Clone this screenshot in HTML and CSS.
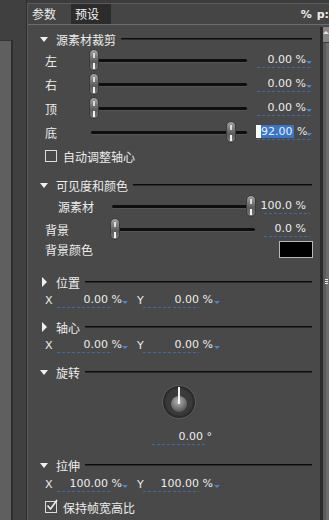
FILE: index.html
```html
<!DOCTYPE html>
<html lang="zh-CN">
<head>
    <meta charset="UTF-8">
    <title>参数</title>
    <link rel="stylesheet" href="styles.css">
</head>
<body>
<div class="app">
    <div class="side"><div class="side-box"></div></div>

    <div class="panel">
        <div class="tabs">
            <span class="tab">参数</span>
            <span class="tab tab-dark">预设</span>
            <span class="tab-extra">%<span class="tab-p">p:</span></span>
        </div>

        <div class="body">
            <div class="content">

                <!-- 源素材裁剪 -->
                <div class="sec sec-top">
                    <span class="tri"></span><span class="sec-title">源素材裁剪</span><span class="sec-line"></span>
                </div>
                <div class="row">
                    <span class="lbl">左</span>
                    <div class="slider"><span class="thumb" style="left: calc((100% - 10px) * 0)"></span></div>
                    <span class="val">0.00 %</span>
                </div>
                <div class="row">
                    <span class="lbl">右</span>
                    <div class="slider"><span class="thumb" style="left: calc((100% - 10px) * 0)"></span></div>
                    <span class="val">0.00 %</span>
                </div>
                <div class="row">
                    <span class="lbl">顶</span>
                    <div class="slider"><span class="thumb" style="left: calc((100% - 10px) * 0)"></span></div>
                    <span class="val">0.00 %</span>
                </div>
                <div class="row">
                    <span class="lbl">底</span>
                    <div class="slider"><span class="thumb" style="left: calc((100% - 10px) * 0.92)"></span></div>
                    <span class="val"><span class="sel">92.00</span> %</span>
                </div>
                <div class="row">
                    <span class="check"></span><span>自动调整轴心</span>
                </div>

                <!-- 可见度和颜色 -->
                <div class="sec sec-2">
                    <span class="tri"></span><span class="sec-title">可见度和颜色</span><span class="sec-line"></span>
                </div>
                <div class="row row-22 row-wide">
                    <span class="lbl lbl-in">源素材</span>
                    <div class="slider"><span class="thumb" style="left: calc((100% - 10px) * 1)"></span></div>
                    <span class="val val-plain">100.0 %</span>
                </div>
                <div class="row row-wide">
                    <span class="lbl">背景</span>
                    <div class="slider"><span class="thumb" style="left: calc((100% - 10px) * 0)"></span></div>
                    <span class="val val-plain">0.0 %</span>
                </div>
                <div class="row row-16">
                    <span class="lbl">背景颜色</span>
                    <span class="swatch"></span>
                </div>

                <!-- 位置 -->
                <div class="sec sec-3">
                    <span class="tri tri-closed"></span><span class="sec-title">位置</span><span class="sec-line"></span>
                </div>
                <div class="row row-16 xy">
                    <span class="xy-lbl">X</span><span class="xy-val xy-x">0.00 %</span>
                    <span class="xy-lbl xy-lbl-y">Y</span><span class="xy-val xy-y">0.00 %</span>
                </div>

                <!-- 轴心 -->
                <div class="sec sec-4">
                    <span class="tri tri-closed"></span><span class="sec-title">轴心</span><span class="sec-line"></span>
                </div>
                <div class="row row-16 xy">
                    <span class="xy-lbl">X</span><span class="xy-val xy-x">0.00 %</span>
                    <span class="xy-lbl xy-lbl-y">Y</span><span class="xy-val xy-y">0.00 %</span>
                </div>

                <!-- 旋转 -->
                <div class="sec sec-4">
                    <span class="tri"></span><span class="sec-title">旋转</span><span class="sec-line"></span>
                </div>
                <div class="knob-row">
                    <div class="knob"><div class="knob-ball"></div></div>
                </div>
                <div class="row row-16 rot-row">
                    <span class="rot-val">0.00 °</span>
                </div>

                <!-- 拉伸 -->
                <div class="sec sec-6">
                    <span class="tri"></span><span class="sec-title">拉伸</span><span class="sec-line"></span>
                </div>
                <div class="row row-16 xy xy-last">
                    <span class="xy-lbl">X</span><span class="xy-val xy-x">100.00 %</span>
                    <span class="xy-lbl xy-lbl-y">Y</span><span class="xy-val xy-y">100.00 %</span>
                </div>
                <div class="row row-20 row-last">
                    <span class="check check-on">
                        <svg width="14" height="14" viewBox="0 0 14 14"><path d="M2.5 6.5 L5.5 10 L12 1" fill="none" stroke="#eee" stroke-width="1.6"/></svg>
                    </span><span>保持帧宽高比</span>
                </div>
            </div>

            <div class="scroll">
                <div class="sb-up"><span class="sb-arrow"></span></div>
                <div class="sb-grip"></div>
            </div>
        </div>
    </div>
</div>
</body>
</html>
```

FILE: styles.css
```css
body {
    margin: 0;
    background-color: #3c3c3c;
    font-family: "Noto Sans CJK SC", "DejaVu Sans", sans-serif;
    font-size: 12px;
    color: #ececec;
}
.app {
    display: flex;
    width: 329px;
    height: 520px;
    overflow: hidden;
}

/* left strip */
.side {
    width: 26px;
    background-color: #404040;
    border-right: 1px solid #2c2c2c;
    display: flex;
    flex-direction: column;
}
.side-box {
    margin-top: 40px;
    width: 11px;
    flex: 1;
    background-color: #5f5f5f;
    border-top: 1px solid #343434;
    border-right: 2px solid #2e2e2e;
}

/* panel */
.panel {
    flex: 1;
    min-width: 0;
    margin-top: 3px;
    border-top: 1px solid #5a5a5a;
    border-left: 1px solid #5a5a5a;
    background-color: #494949;
    display: flex;
    flex-direction: column;
}
.tabs {
    height: 20px;
    display: flex;
    align-items: center;
    background-color: #454545;
}
.tab {
    padding: 0 4px;
    line-height: 20px;
}
.tab-dark {
    margin-left: 11px;
    padding-right: 12px;
    background-color: #2c2c2c;
    color: #f4f4f4;
}
.tab-extra {
    margin-left: auto;
    white-space: nowrap;
    font-family: "DejaVu Sans", sans-serif;
    font-weight: bold;
    font-size: 11px;
}
.tab-p {
    margin-left: 5px;
}
.body {
    flex: 1;
    display: flex;
    border-top: 1px solid #6c6c6c;
}
.content {
    flex: 1;
    padding-right: 8px;
}

/* section headers */
.sec {
    height: 20px;
    display: flex;
    align-items: center;
    padding-left: 12px;
}
.sec-top { margin-top: 5px; height: 18px; }
.sec-2 { margin-top: 7px; }
.sec-3 { margin-top: 15px; }
.sec-4 { margin-top: 9px; }
.sec-6 { margin-top: 10px; }
.tri {
    width: 0;
    height: 0;
    border-top: 5px solid #f0f0f0;
    border-left: 4px solid transparent;
    border-right: 4px solid transparent;
    margin-right: 8px;
}
.tri-closed {
    border-top: 5px solid transparent;
    border-bottom: 5px solid transparent;
    border-left: 5px solid #f0f0f0;
    border-right: 0;
    margin-left: 2px;
    margin-right: 9px;
}
.sec-line {
    flex: 1;
    height: 1px;
    margin-left: 5px;
    background-color: #0c0c0c;
    border-bottom: 1px solid #2c2c2c;
}

/* rows */
.row {
    height: 24px;
    display: flex;
    align-items: center;
    padding-left: 17px;
}
.row-22 { height: 22px; }
.row-20 { height: 20px; }
.row-16 { height: 16px; }
.lbl {
    width: 44px;
    flex-shrink: 0;
    white-space: nowrap;
}
.row-wide .lbl { width: 65px; }
.lbl-in { padding-left: 13px; box-sizing: border-box; }

.slider {
    flex: 1;
    height: 22px;
    position: relative;
    margin-right: 8px;
}
.row-wide .slider { margin-right: 0; }
.slider::before {
    content: "";
    position: absolute;
    left: 2px;
    right: 1px;
    top: 10px;
    height: 3px;
    border-radius: 2px;
    background-color: #0e0e0e;
    box-shadow: 0 1px 0 #555;
}
.thumb {
    position: absolute;
    top: 0;
    width: 10px;
    height: 22px;
    border-radius: 5px;
    box-sizing: border-box;
    border: 1px solid #3a3a3a;
    background: linear-gradient(#a2a2a2, #777 35%, #5a5a5a 60%, #7a7a7a);
}
.thumb::before, .thumb::after {
    content: "";
    position: absolute;
    left: 3px;
    width: 2px;
    background-color: #f2f2f2;
}
.thumb::before { top: 3px; height: 5px; opacity: 0.8; }
.thumb::after { top: 13px; height: 6px; }

/* value fields */
.val {
    position: relative;
    width: 56px;
    flex-shrink: 0;
    box-sizing: border-box;
    padding-right: 6px;
    text-align: right;
    font-family: "DejaVu Sans", sans-serif;
    font-size: 11px;
    line-height: 14px;
    white-space: nowrap;
}
.val::before, .xy-val::before, .rot-val::before {
    content: "";
    position: absolute;
    left: 1px;
    right: 2px;
    bottom: -1px;
    height: 1px;
    background: repeating-linear-gradient(90deg, #3d6aa6 0 3px, transparent 3px 5px);
}
.val::after, .xy-val::after {
    content: "";
    position: absolute;
    right: 0;
    bottom: 3px;
    border-top: 3px solid #4a84d4;
    border-left: 3px solid transparent;
    border-right: 3px solid transparent;
}
.val-plain::before { left: 8px; }
.val-plain::after { display: none; }
.sel {
    display: inline-block;
    padding-left: 5px;
    padding-right: 1px;
    background-color: #3a76c6;
    box-shadow: inset 5px 0 0 #fff;
    color: #e8f0ff;
    line-height: 13px;
}

.check {
    width: 10px;
    height: 10px;
    border: 1px solid #ddd;
    margin-right: 6px;
    flex-shrink: 0;
    position: relative;
}
.check svg {
    position: absolute;
    left: -1px;
    top: -3px;
}
.swatch {
    margin-left: auto;
    margin-right: -1px;
    width: 32px;
    height: 15px;
    background-color: #000;
    border: 1px solid #b8b8b8;
}

/* X / Y fields */
.xy {
    font-family: "DejaVu Sans", sans-serif;
    font-size: 11px;
}
.xy-lbl {
    width: 12px;
    flex-shrink: 0;
}
.xy-lbl-y {
    width: 6px;
    margin-left: 9px;
}
.xy-val {
    position: relative;
    box-sizing: border-box;
    text-align: right;
    line-height: 14px;
    white-space: nowrap;
}
.xy-x { width: 71px; padding-right: 6px; }
.xy-y { width: 77px; padding-right: 7px; }
.xy-x::before { left: 0; right: 16px; }
.xy-y::before { left: 0; right: 21px; }
.xy-last { margin-top: 1px; }

/* rotation */
.knob-row {
    margin-top: 3px;
    height: 34px;
    display: flex;
    padding-left: 134px;
}
.knob {
    width: 32px;
    height: 32px;
    border-radius: 50%;
    border: 1px solid #5c5c5c;
    background: radial-gradient(circle, #3a3a3a 55%, #262626 70%, #454545 100%);
    display: flex;
    align-items: center;
    justify-content: center;
    position: relative;
}
.knob-ball {
    margin-top: 3px;
    width: 16px;
    height: 16px;
    border-radius: 50%;
    background: radial-gradient(circle at 45% 35%, #b4b4b4, #6a6a6a 60%, #3c3c3c);
}
.knob::after {
    content: "";
    position: absolute;
    left: 15px;
    top: 1px;
    width: 2px;
    height: 17px;
    background-color: #f6f6f6;
}
.rot-row {
    margin-top: 10px;
    padding-left: 124px;
    font-family: "DejaVu Sans", sans-serif;
    font-size: 11px;
}
.rot-val {
    position: relative;
    width: 62px;
    padding-right: 2px;
    box-sizing: border-box;
    text-align: right;
    line-height: 14px;
}
.rot-val::before { left: 0; right: 8px; }
.row-last { margin-top: 5px; }

/* scrollbar */
.scroll {
    width: 9px;
    margin-top: 2px;
    background: linear-gradient(90deg, #2b2b2b 0 3px, #5a5a5a 3px 6px, #6c6c6c 6px);
    display: flex;
    flex-direction: column;
}
.sb-up {
    height: 16px;
    margin-left: 3px;
    background-color: #858585;
    border-bottom: 1px solid #3c3c3c;
    display: flex;
    justify-content: center;
    padding-top: 4px;
    box-sizing: border-box;
}
.sb-arrow {
    width: 0;
    height: 0;
    border-bottom: 3px solid #e8e8e8;
    border-left: 3px solid transparent;
    border-right: 3px solid transparent;
}
.sb-grip {
    margin-top: 236px;
    margin-left: 5px;
    width: 3px;
    height: 5px;
    background: repeating-linear-gradient(#eee 0 1px, transparent 1px 2px);
}
```
